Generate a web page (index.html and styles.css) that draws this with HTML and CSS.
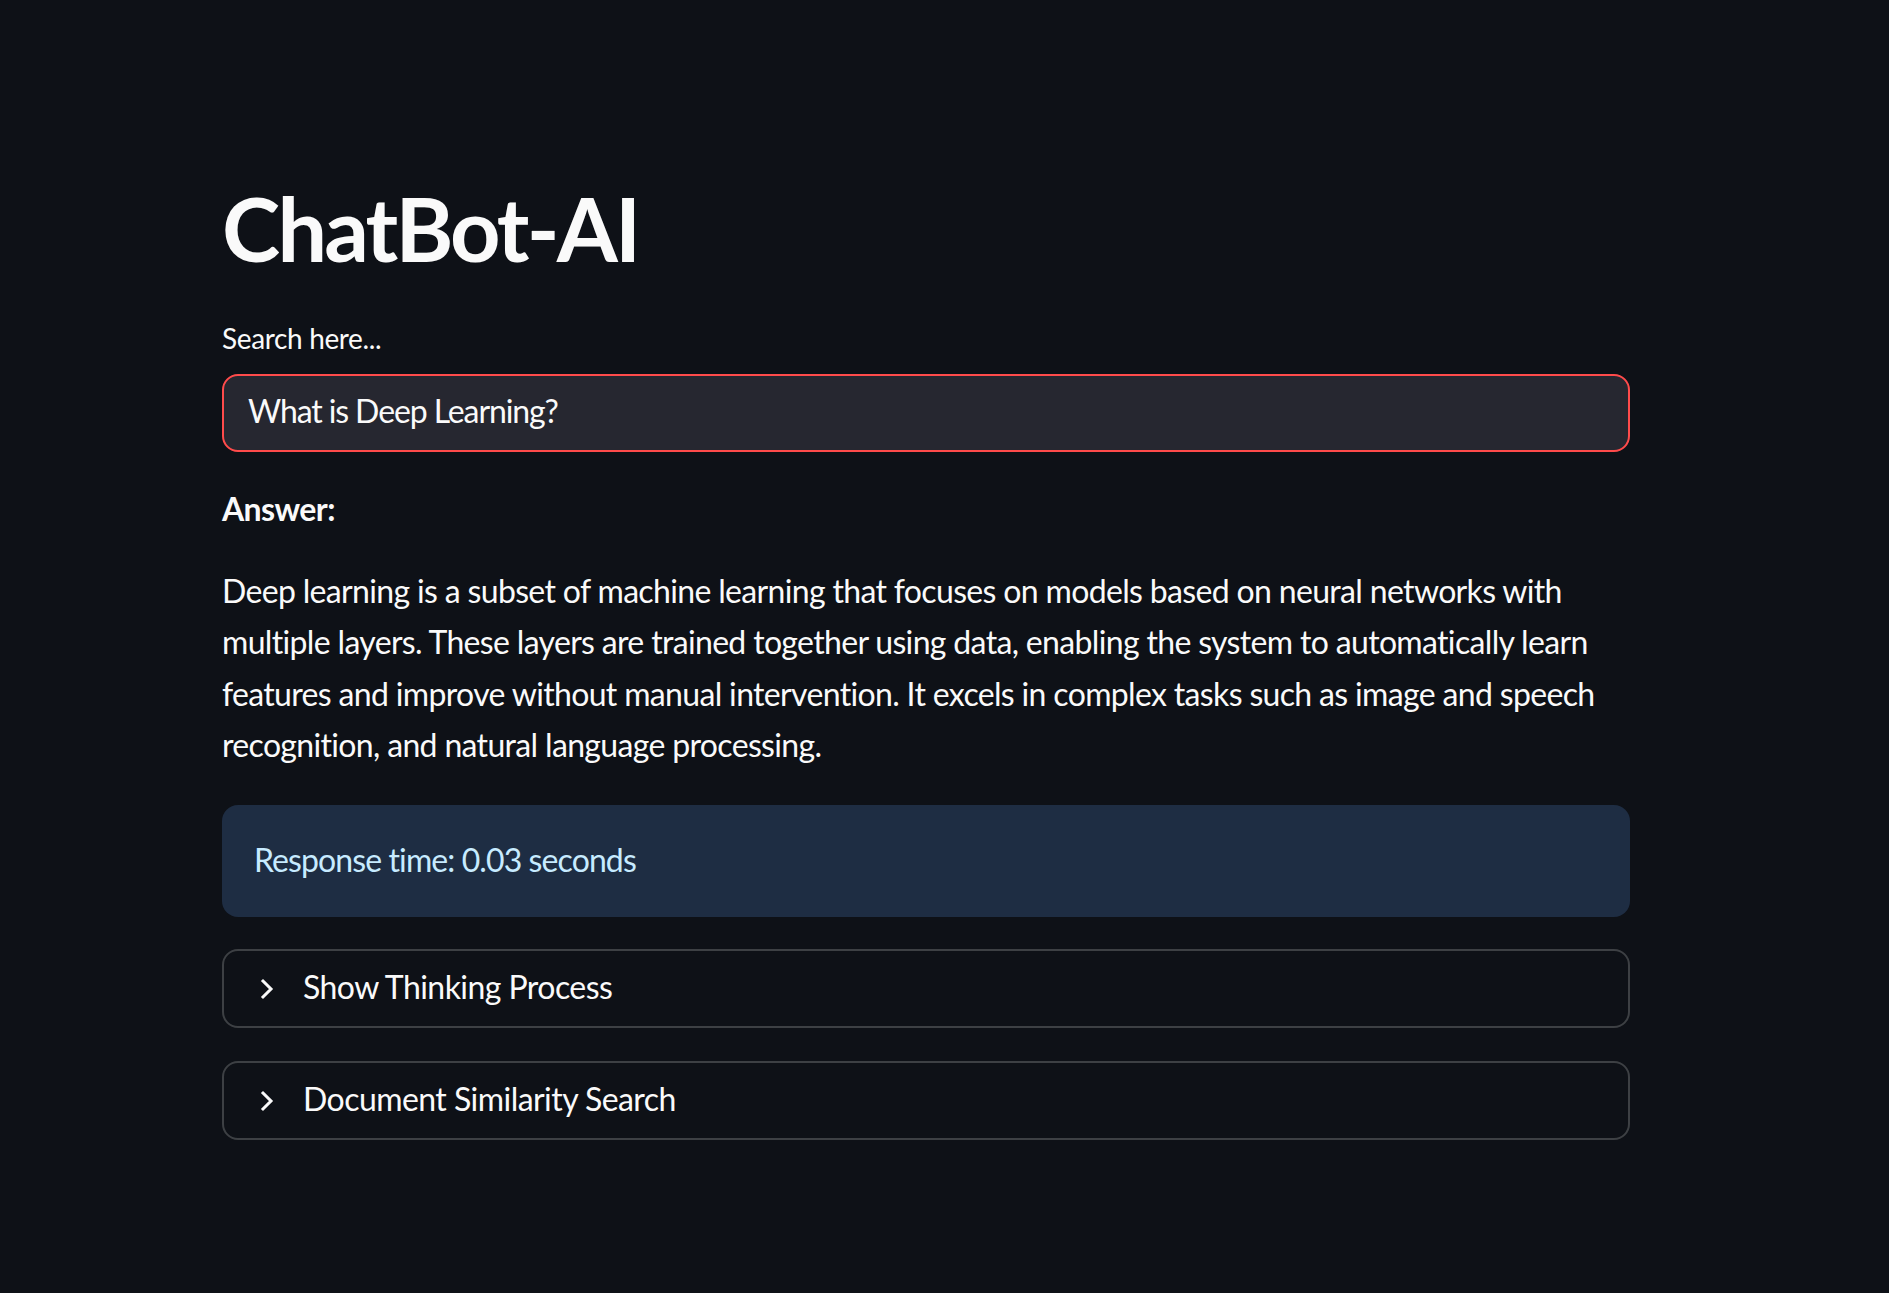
FILE: index.html
```html
<!DOCTYPE html>
<html lang="en">
<head>
<meta charset="utf-8">
<title>ChatBot-AI</title>
<link rel="stylesheet" href="styles.css">
</head>
<body>
<main class="main">
  <h1 class="title">ChatBot-AI</h1>
  <label class="label" for="q">Search here...</label>
  <div class="input">What is Deep Learning?</div>
  <p class="answer-head">Answer:</p>
  <p class="answer">Deep learning is a subset of machine learning that focuses on models based on neural networks with multiple layers. These layers are trained together using data, enabling the system to automatically learn features and improve without manual intervention. It excels in complex tasks such as image and speech recognition, and natural language processing.</p>
  <div class="info">Response time: 0.03 seconds</div>
  <div class="expander">
    <svg class="chev" width="14" height="22" viewBox="0 0 14 22"><path d="M3 3 L11 11 L3 19" fill="none" stroke="#fafafa" stroke-width="3" stroke-linecap="square"/></svg>
    <span>Show Thinking Process</span>
  </div>
  <div class="expander">
    <svg class="chev" width="14" height="22" viewBox="0 0 14 22"><path d="M3 3 L11 11 L3 19" fill="none" stroke="#fafafa" stroke-width="3" stroke-linecap="square"/></svg>
    <span>Document Similarity Search</span>
  </div>
</main>
</body>
</html>
```

FILE: styles.css
```css
html, body {
  margin: 0;
  padding: 0;
  background: #0e1117;
}
body {
  color: #fafafa;
  font-family: Lato, "Noto Sans", sans-serif;
  min-height: 1293px;
}
.main {
  width: 1408px;
  margin-left: 222px;
  padding-top: 175px;
  display: flex;
  flex-direction: column;
}
.title {
  margin: 0;
  font-size: 88px;
  line-height: 106px;
  font-weight: 700;
  letter-spacing: -2.8px;
}
.label {
  display: block;
  margin-top: 37px;
  font-size: 28px;
  line-height: 40px;
  letter-spacing: -0.35px;
}
.input {
  box-sizing: border-box;
  margin-top: 16px;
  height: 78px;
  border: 2px solid #ff4b4b;
  border-radius: 16px;
  background: #262730;
  padding: 0 24px 4px;
  font-size: 32px;
  line-height: 70px;
  letter-spacing: -1.1px;
}
.answer-head {
  margin: 31px 0 0;
  font-size: 32px;
  line-height: 51.2px;
  font-weight: 700;
  letter-spacing: -0.6px;
}
.answer {
  margin: 31px 0 0;
  font-size: 32px;
  line-height: 51.2px;
  letter-spacing: -0.66px;
}
.info {
  box-sizing: border-box;
  margin-top: 35px;
  height: 112px;
  border-radius: 16px;
  background: #1e2d43;
  color: #c7ebff;
  padding: 31px 32px 33px;
  font-size: 32px;
  line-height: 48px;
  letter-spacing: -0.9px;
}
.expander {
  box-sizing: border-box;
  margin-top: 32px;
  height: 79px;
  border: 2px solid #3d4044;
  border-radius: 16px;
  display: flex;
  align-items: center;
  gap: 29px;
  padding: 0 0 4px 36px;
  font-size: 32px;
  line-height: 70px;
  letter-spacing: -0.55px;
}
.expander + .expander {
  margin-top: 33px;
}
.chev {
  display: block;
  margin-top: 4px;
}
```
